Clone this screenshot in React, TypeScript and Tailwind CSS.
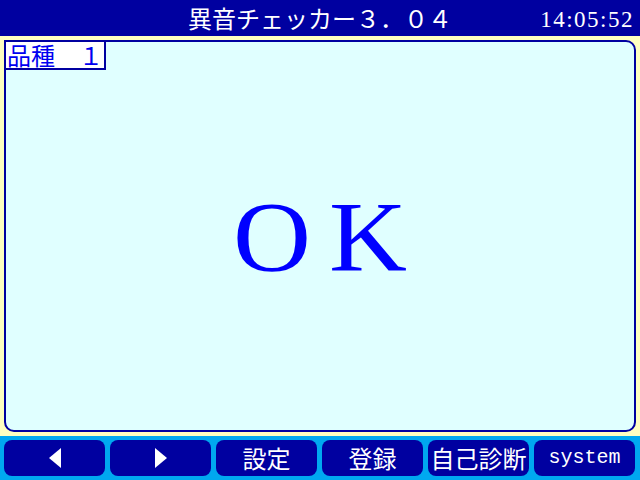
import React from "react";

const jp = { fontFamily: '"Noto Sans CJK JP", "Noto Sans", sans-serif' };

function Btn({ children }: { children: React.ReactNode }) {
  return (
    <div className="flex h-[36px] w-[101px] items-center justify-center rounded-[8px] bg-[#0000A0] text-white">
      {children}
    </div>
  );
}

export default function App() {
  return (
    <div className="flex h-[480px] w-[640px] flex-col overflow-hidden bg-[#FFFFC0]">
      <div className="grid h-[36px] grid-cols-[1fr_auto_1fr] items-center bg-[#0000A0] text-white">
        <div />
        <div className="text-[24px] leading-none tracking-[0px]" style={jp}>
          異音チェッカー３．０４
        </div>
        <div className="flex justify-end pr-[6px] pt-[2px]">
          <span
            className="text-[23px] leading-none tracking-[1.5px]"
            style={{ fontFamily: '"Liberation Serif", serif' }}
          >
            14:05:52
          </span>
        </div>
      </div>
      <div className="flex h-[400px] p-[4px]">
        <div className="relative flex flex-1 items-center justify-center rounded-[10px] border-2 border-[#0000A0] bg-[#E0FFFF]">
          <div
            className="absolute left-[-2px] top-[-2px] flex h-[30px] w-[102px] items-center border-2 border-[#0000A0] bg-white pl-[1px] text-[24px] leading-none text-[#0000F0]"
            style={jp}
          >
            品種　１
          </div>
          <div
            className="flex pt-[2px] text-[100px] leading-none text-[#0000FF]"
            style={{ fontFamily: '"Liberation Serif", serif' }}
          >
            <span className="inline-block w-[96px] scale-x-[1.08] text-center">O</span>
            <span className="inline-block w-[96px] scale-x-[1.08] text-center">K</span>
          </div>
        </div>
      </div>
      <div className="flex h-[44px] items-center gap-[5px] bg-[#00A8F0] px-[4px]">
        <Btn>
          <svg width="12" height="20" viewBox="0 0 12 20">
            <polygon points="12,0 12,20 0,10" fill="white" />
          </svg>
        </Btn>
        <Btn>
          <svg width="12" height="20" viewBox="0 0 12 20">
            <polygon points="0,0 0,20 12,10" fill="white" />
          </svg>
        </Btn>
        <Btn>
          <span className="text-[24px] leading-none" style={jp}>設定</span>
        </Btn>
        <Btn>
          <span className="text-[24px] leading-none" style={jp}>登録</span>
        </Btn>
        <Btn>
          <span className="text-[24px] leading-none" style={jp}>自己診断</span>
        </Btn>
        <Btn>
          <span
            className="text-[20px] leading-none"
            style={{ fontFamily: '"Liberation Mono", monospace' }}
          >
            system
          </span>
        </Btn>
      </div>
    </div>
  );
}
